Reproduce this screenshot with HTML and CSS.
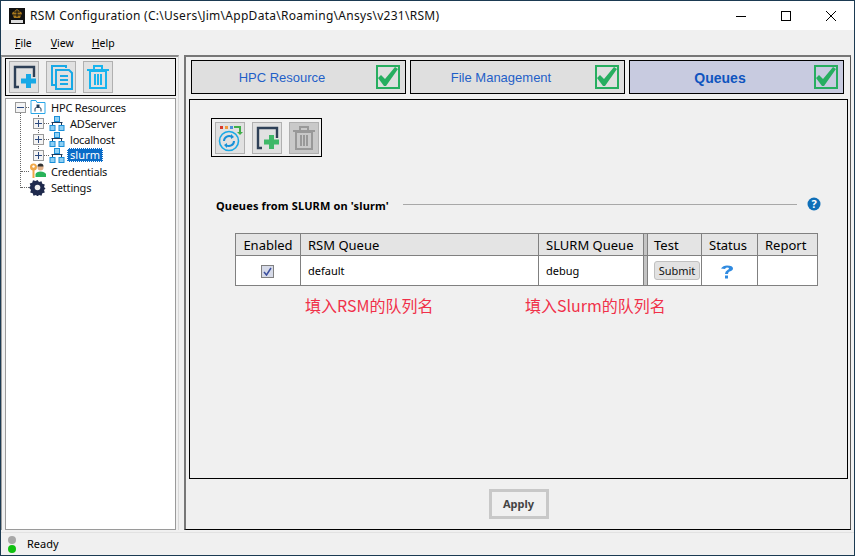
FILE: index.html
```html
<!DOCTYPE html>
<html lang="en">
<head>
<meta charset="utf-8">
<title>RSM Configuration</title>
<link rel="stylesheet" href="styles.css">
</head>
<body>
<div class="window">
  <header class="titlebar">
    <svg class="app-icon" width="16" height="16" viewBox="0 0 16 16"><rect width="16" height="16" fill="#111"/><path d="M8 1l5 4-2 5H5L3 5z" fill="#a8781c"/><path d="M5 4h6M4 7h8M8 2v7" stroke="#111" stroke-width="1"/><rect x="2" y="12" width="12" height="3" fill="#ddd"/></svg>
    <span class="title-text">RSM Configuration (C:\Users\Jim\AppData\Roaming\Ansys\v231\RSM)</span>
    <div class="win-controls">
      <svg width="12" height="12" viewBox="0 0 12 12"><path d="M1 6.500h10" stroke="#000"/></svg>
      <svg width="12" height="12" viewBox="0 0 12 12"><rect x="1.500" y="1.500" width="9" height="9" fill="none" stroke="#000"/></svg>
      <svg width="12" height="12" viewBox="0 0 12 12"><path d="M1 1l10 10M11 1L1 11" stroke="#000"/></svg>
    </div>
  </header>
  <nav class="menubar">
    <span><u>F</u>ile</span><span><u>V</u>iew</span><span><u>H</u>elp</span>
  </nav>
  <main class="panes">
    <aside class="left-pane">
      <div class="toolbar left-toolbar">
        <button class="tool"><svg width="28" height="28" viewBox="0 0 28 28"><path d="M9 24H5V4h19v10" fill="none" stroke="#2e4057" stroke-width="2.400"/><path d="M11 18h15M18.500 11v14" stroke="#18a9e6" stroke-width="5"/></svg></button>
        <button class="tool"><svg width="28" height="28" viewBox="0 0 28 28" fill="none" stroke="#18a9e6" stroke-width="2"><path d="M8 22H5V3h14v2"/><path d="M9 7h13l3 3v16H9z" fill="#e0e0e0"/><path d="M13 13h8M13 17h8M13 21h8"/></svg></button>
        <button class="tool"><svg width="28" height="28" viewBox="0 0 28 28" fill="none" stroke="#18b4ee" stroke-width="2"><path d="M3 7h22M10 6V3h8v3"/><path d="M6 8v17h16V8z"/><path d="M11 11v11M14 11v11M17 11v11"/></svg></button>
      </div>
      <div class="tree">
        <div class="tree-row root">
          <span class="exp"><i class="minus"></i></span><span class="dots d-root"></span>
          <svg class="ticon" width="16" height="16" viewBox="0 0 16 16"><path d="M1 3.500V1.500h5l1 2h8v11H1z" fill="#fff" stroke="#2aa7e8"/><path d="M5 12.500V10q0-1.500 1.500-1.500h3Q11 8.500 11 10v2.500" fill="none" stroke="#24405c"/><rect x="6.500" y="5.500" width="3" height="3" fill="#24405c"/></svg>
          <span class="label">HPC Resources</span>
        </div>
        <div class="tree-row child">
          <span class="exp"><i class="plus"></i></span><span class="dots d-child"></span>
          <svg class="ticon" width="16" height="16" viewBox="0 0 16 16"><use href="#srv"/></svg>
          <span class="label">ADServer</span>
        </div>
        <div class="tree-row child">
          <span class="exp"><i class="plus"></i></span><span class="dots d-child"></span>
          <svg class="ticon" width="16" height="16" viewBox="0 0 16 16"><use href="#srv"/></svg>
          <span class="label">localhost</span>
        </div>
        <div class="tree-row child">
          <span class="exp"><i class="plus"></i></span><span class="dots d-child"></span>
          <svg class="ticon" width="16" height="16" viewBox="0 0 16 16"><use href="#srv"/></svg>
          <span class="label selected">slurm</span>
        </div>
        <div class="tree-row top">
          <span class="dots d-top"></span>
          <svg class="ticon" width="17" height="16" viewBox="0 0 17 16"><circle cx="4.500" cy="4" r="3.500" fill="#f0a84a"/><circle cx="4.500" cy="3.500" r="1.200" fill="#fff"/><path d="M4.500 7v8" stroke="#f0a84a" stroke-width="2"/><circle cx="11.500" cy="4.500" r="3" fill="#e0b088"/><path d="M8.500 3.500q0-3 3-3t3 3z" fill="#333"/><path d="M6.500 14v-3q1-2.500 5-2.500t5.500 2.500v3z" fill="#29b35a"/></svg>
          <span class="label">Credentials</span>
        </div>
        <div class="tree-row top">
          <span class="dots d-top"></span>
          <svg class="ticon" width="17" height="17" viewBox="0 0 17 17"><path d="M8.500 1l1.500 2 2.500-.8.800 2.500 2.500.8-.8 2.500 1.500 1.500-1.500 1.500.8 2.500-2.500.8-.8 2.500-2.500-.8-1.500 1.500-1.500-1.500-2.500.8-.8-2.500-2.500-.8.8-2.500L0 8.500l1.500-1.500-.8-2.500 2.500-.8.800-2.500 2.500.8z" fill="#1f2a4d"/><circle cx="8.500" cy="8.500" r="2.800" fill="#f0f0f0"/></svg>
          <span class="label">Settings</span>
        </div>
        <svg class="defs" width="0" height="0"><defs><g id="srv"><path d="M3.500 10V7.500h9V10M2.500 7.500h11" fill="none" stroke="#1e3a5a"/><rect x="5.500" y="1.500" width="5" height="5" fill="#8ed0f4" stroke="#1a8fd8"/><rect x="1" y="10.500" width="5" height="5" fill="#8ed0f4" stroke="#1a8fd8"/><rect x="10" y="10.500" width="5" height="5" fill="#8ed0f4" stroke="#1a8fd8"/></g></defs></svg>
      </div>
    </aside>
    <section class="right-pane">
      <div class="tabs">
        <div class="tab"><span class="tab-label">HPC Resource</span><svg class="check" width="24" height="24" viewBox="0 0 24 24"><use href="#chk"/></svg></div>
        <div class="tab"><span class="tab-label">File Management</span><svg class="check" width="24" height="24" viewBox="0 0 24 24"><use href="#chk"/></svg></div>
        <div class="tab active"><span class="tab-label">Queues</span><svg class="check" width="24" height="24" viewBox="0 0 24 24"><defs><g id="chk"><rect x="1" y="1" width="22" height="22" fill="none" stroke="#27ae60" stroke-width="2"/><path d="M2 13l3-3 4 4 10-12 3 2-12 17H8z" fill="#27ae60"/></g></defs><use href="#chk"/></svg></div>
      </div>
      <div class="content">
        <div class="toolbar queue-toolbar">
          <button class="tool"><svg width="28" height="28" viewBox="0 0 28 28"><rect x="4" y="2" width="3" height="3" fill="#d8392b"/><rect x="9" y="2" width="3" height="3" fill="#f09a3c"/><rect x="14" y="2" width="3" height="3" fill="#4a90d9"/><path d="M18 3h6v6" fill="none" stroke="#3fae49" stroke-width="2"/><path d="M21 8l3 3 3-3z" fill="#3fae49"/><circle cx="13" cy="17" r="9.500" fill="none" stroke="#18a9e6" stroke-width="1.600"/><path d="M8 17a5 5 0 0 1 8-4M18 17a5 5 0 0 1-8 4" fill="none" stroke="#1590d8" stroke-width="2"/><path d="M15 10l3 3-3 2zM11 24l-3-3 3-2z" fill="#1590d8"/></svg></button>
          <button class="tool"><svg width="28" height="28" viewBox="0 0 28 28"><path d="M9 24H5V4h19v10" fill="none" stroke="#2e4057" stroke-width="2.400"/><path d="M11 18h15M18.500 11v14" stroke="#3fb868" stroke-width="5"/></svg></button>
          <button class="tool disabled"><svg width="28" height="28" viewBox="0 0 28 28" fill="none" stroke="#999" stroke-width="2"><path d="M3 7h22M10 6V3h8v3"/><path d="M6 8v17h16V8z"/><path d="M11 11v11M14 11v11M17 11v11"/></svg></button>
        </div>
        <div class="section-head">
          <span class="section-title">Queues from SLURM on 'slurm'</span>
          <span class="section-rule"></span>
          <svg class="help" width="14" height="14" viewBox="0 0 14 14"><circle cx="7" cy="7" r="6.500" fill="#0f6fb8"/><text x="7" y="11" text-anchor="middle" class="help-q">?</text></svg>
        </div>
        <table class="queues">
          <colgroup><col class="c1"><col class="c2"><col class="c3"><col class="c4"><col class="c5"><col class="c6"><col class="c7"></colgroup>
          <thead>
            <tr><th class="center">Enabled</th><th>RSM Queue</th><th>SLURM Queue</th><th class="gap"></th><th class="test-cell">Test</th><th>Status</th><th>Report</th></tr>
          </thead>
          <tbody>
            <tr>
              <td class="center check-cell"><span class="cb"><svg width="9" height="9" viewBox="0 0 9 9"><path d="M1 5l2.500 3L8 1" fill="none" stroke="#3b4f9f" stroke-width="1.500"/></svg></span></td>
              <td>default</td>
              <td>debug</td>
              <td class="gap"></td>
              <td class="test-cell"><button class="submit">Submit</button></td>
              <td class="center status-cell"><svg class="qmark" width="14" height="14" viewBox="0 0 14 14"><path d="M1 3.500Q3 0.500 7 0.500q6 0 6 3 0 2-3.500 3-1.500.5-1.500 2.500H5q0-2.500 2.500-4 1.500-.7 1.500-1.500 0-1-2-1-1.500 0-2 1.500z" fill="#2f8ae0"/><rect x="5" y="10.500" width="3" height="3" fill="#2f8ae0"/></svg></td>
              <td></td>
            </tr>
          </tbody>
        </table>
        <div class="notes"><span class="note n1">填入RSM的队列名</span><span class="note">填入Slurm的队列名</span></div>
      </div>
      <div class="apply-row"><button class="apply">Apply</button></div>
    </section>
  </main>
  <footer class="statusbar">
    <span class="lights"><i class="off"></i><i class="on"></i></span>
    <span class="status-text">Ready</span>
  </footer>
</div>
</body>
</html>
```
FILE: styles.css
```css
* { box-sizing: border-box; }
html, body { margin: 0; padding: 0; }
body { width: 855px; height: 556px; overflow: hidden; font-family: "Noto Sans", "Noto Sans CJK SC", sans-serif; font-size: 11px; color: #000; background: #f0f0f0; }
button { font-family: inherit; margin: 0; padding: 0; }

.window { width: 855px; height: 556px; display: flex; flex-direction: column; border: 1px solid #1b3a52; background: #f0f0f0; }

.titlebar { height: 29px; flex: none; background: #fff; display: flex; align-items: center; padding-left: 8px; }
.app-icon { flex: none; }
.title-text { margin-left: 5px; font-family: "Noto Sans", sans-serif; font-size: 12px; letter-spacing: 0.28px; color: #111; }
.win-controls { margin-left: auto; display: flex; gap: 33px; padding-right: 17px; }

.menubar { height: 25px; flex: none; background: #f0f0f0; display: flex; align-items: center; gap: 18px; padding-left: 14px; font-size: 10.5px; }
.menubar span:first-child { margin-right: 1px; }

.panes { flex: 1; min-height: 0; display: flex; padding-bottom: 2px; border-bottom: 1px solid #e2e2e2; }
.left-pane { width: 178px; flex: none; padding: 1px 2px 0 3px; border-top: 2px solid #8a8a8a; border-left: 1px solid #a0a0a0; border-right: 1px solid #d8d8d8; display: flex; flex-direction: column; gap: 2px; }

.toolbar { display: flex; border: 1px solid #000; }
.left-toolbar { height: 38px; gap: 7px; padding: 2px 3px; flex: none; background: #f0f0f0; }
.tool { width: 30px; height: 32px; border: 1px solid #b0b0b0; background: #e1e1e1; display: flex; align-items: center; justify-content: center; }
.tool.disabled { background: #c9c9c9; }

.tree { flex: 1; position: relative; background: #fff; border: 1px solid #9a9a9a; }
.defs { position: absolute; }
.tree-row { height: 16px; display: flex; align-items: center; position: relative; font-size: 11px; }
.root { padding-left: 9px; }
.child { padding-left: 27px; }
.top { padding-left: 15px; }
.exp { width: 11px; height: 11px; border: 1px solid #9a9a9a; background: #f4f4f4; display: block; position: relative; z-index: 1; flex: none; }
.minus::before, .plus::before, .plus::after { content: ""; position: absolute; background: #2c4a80; }
.minus::before, .plus::before { left: 1px; top: 4px; width: 7px; height: 1px; }
.plus::after { left: 4px; top: 1px; width: 1px; height: 7px; }
.dots { display: block; border-top: 1px dotted #666; flex: none; }
.d-root { width: 3px; margin-right: 1px; }
.d-child { width: 5px; }
.d-top { width: 8px; }
.ticon { flex: none; }
.label { margin-left: 5px; white-space: nowrap; color: #111; letter-spacing: -0.2px; }
.selected { background: #0a6cc8; color: #fff; padding: 0 3px; margin-left: 2px; outline: 1px dotted #fff; outline-offset: -1px; height: 14px; line-height: 14px; letter-spacing: 0.1px; }
.tree::before { content: ""; position: absolute; left: 14px; top: 14px; height: 75px; border-left: 1px dotted #666; }
.tree::after { content: ""; position: absolute; left: 32px; top: 16px; height: 42px; border-left: 1px dotted #666; }

.right-pane { flex: 1; min-width: 0; margin-left: 5px; margin-right: 3px; border-top: 2px solid #777; border-left: 2px solid #777; border-right: 1px solid #555; border-bottom: 1px solid #000; display: flex; flex-direction: column; padding: 3px 2px 0 3px; }
.tabs { display: flex; gap: 4px; height: 34px; flex: none; padding-left: 2px; }
.tab { width: 215px; height: 34px; border: 1px solid #000; background: #dfdfdf; display: flex; align-items: center; padding-right: 5px; color: #1f5fc8; font-size: 13px; }
.tab-label { flex: 1; text-align: center; padding: 1px 4px 0 0; font-family: "Liberation Sans", sans-serif; }
.tab.active { background: #c8cbe0; font-weight: 700; font-size: 14px; color: #0f54bf; }
.check { flex: none; }

.content { height: 380px; flex: none; margin-top: 5px; border: 1px solid #000; background: #f0f0f0; padding: 18px 0 0 21px; }
.queue-toolbar { display: inline-flex; height: 39px; gap: 7px; padding: 3px; width: 111px; }
.section-head { display: flex; align-items: center; height: 14px; margin: 41px 0 0 5px; }
.section-title { font-weight: 700; font-size: 11px; white-space: nowrap; letter-spacing: 0.15px; width: 172px; }
.section-rule { flex: none; width: 394px; margin-left: 15px; border-top: 1px solid #a8a8a8; margin-top: -2px; }
.help { margin-left: 10px; flex: none; margin-top: -2px; }
.help-q { font-size: 11px; font-weight: 700; fill: #fff; font-family: "Noto Sans", sans-serif; }

.queues { border-collapse: collapse; table-layout: fixed; width: 582px; margin: 21px 0 0 24px; background: #fff; }
.c1 { width: 65px; } .c2 { width: 238px; } .c3 { width: 105px; } .c4 { width: 4px; } .c5 { width: 54px; } .c6 { width: 56px; } .c7 { width: 60px; }
.queues th, .queues td { border: 1px solid #808080; padding: 0 0 0 7px; text-align: left; font-weight: 400; overflow: hidden; white-space: nowrap; }
.queues th { height: 22px; background: #e4e4e4; font-size: 13px; }
.queues td { height: 30px; font-size: 11px; }
.queues .center { text-align: center; padding-left: 0; }
.queues .check-cell { padding-right: 2px; }
.queues .status-cell { padding-right: 6px; }
.queues .gap { padding: 0; background: #c4c4c4; }
.queues .test-cell { padding-left: 6px; }
.cb { display: inline-flex; width: 13px; height: 13px; border: 1px solid #808080; background: #d6dae8; align-items: center; justify-content: center; vertical-align: middle; }
.submit { width: 46px; height: 19px; border: 1px solid #c0c0c0; border-radius: 3px; background: #e2e2e2; font-size: 11px; color: #111; }
.qmark { vertical-align: middle; }

.notes { margin: 8px 0 0 94px; display: flex; font-size: 16px; color: #f0304a; line-height: 22px; font-family: "Noto Sans CJK SC", "Noto Sans", sans-serif; }
.n1 { width: 220px; }

.apply-row { flex: 1; display: flex; justify-content: center; align-items: flex-start; padding-top: 10px; }
.apply { width: 60px; height: 30px; border: 3px solid #c8c8c8; background: #f0f0f0; font-weight: 700; font-size: 11px; color: #444; padding-bottom: 2px; }

.statusbar { height: 22px; flex: none; display: flex; align-items: center; padding-left: 7px; gap: 11px; font-size: 11px; }
.lights { display: flex; flex-direction: column; gap: 1px; width: 8px; }
.lights i { display: block; width: 8px; height: 8px; border-radius: 50%; }
.off { background: #a8a8a8; }
.on { background: #10c010; }
.status-text { margin-top: -2px; }
```
